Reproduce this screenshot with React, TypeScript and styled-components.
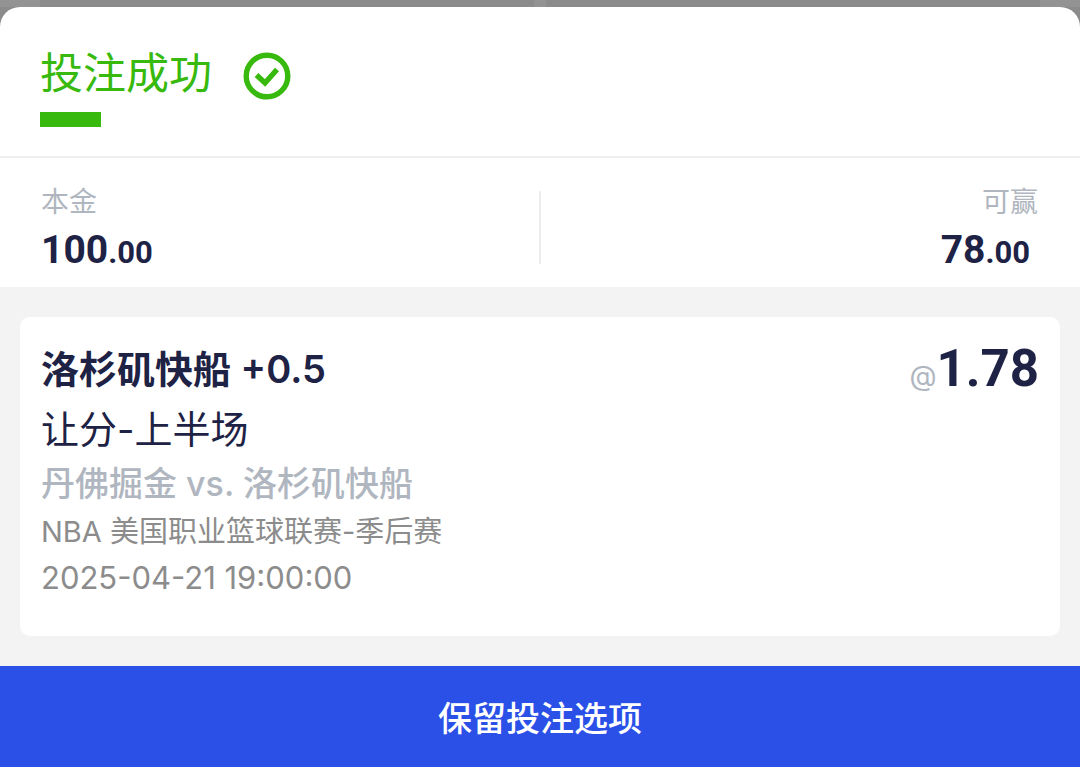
import React from "react";
import styled, { createGlobalStyle } from "styled-components";

const color = {
  ink: "#1e2245",
  green: "#37b90d",
  muted: "#b0b6c0",
  gray: "#8c8c8c",
  surface: "#f3f3f3",
  blue: "#2a50e8",
};

const numberFont = `Roboto, sans-serif`;

const GlobalStyle = createGlobalStyle`
  *, *::before, *::after { box-sizing: border-box; }
  body {
    margin: 0;
    background: #8b8b8b;
    color: ${color.ink};
    font-family: Inter, "Noto Sans CJK SC", sans-serif;
  }
  h1, h2, p, dl, dt, dd { margin: 0; font-weight: 400; }
`;

const Page = styled.div`
  min-height: 100vh;
  display: flex;
  flex-direction: column;
`;

const Backdrop = styled.div`
  display: grid;
  grid-template-columns: 1fr 1fr;
  gap: 12px;
  height: 7px;
  padding: 0 40px;
  background: #939393;
`;

const BackdropTile = styled.div`
  background: #8b8b8b;
`;

const Sheet = styled.main`
  flex: 1;
  display: flex;
  flex-direction: column;
  background: #fff;
  border-radius: 20px 20px 0 0;
`;

const Header = styled.header`
  padding: 36px 40px 29px;
  border-bottom: 2px solid #eeeeee;
`;

const TitleRow = styled.div`
  display: flex;
  align-items: center;
  gap: 31px;
`;

const Title = styled.h1`
  color: ${color.green};
  font-size: 43px;
  line-height: 60px;
`;

const CheckIcon = styled.svg`
  width: 48px;
  height: 48px;
  margin-top: 6px;
`;

const Accent = styled.div`
  width: 61px;
  height: 15px;
  margin-top: 9px;
  background: ${color.green};
`;

const Summary = styled.dl`
  display: flex;
  align-items: flex-start;
  padding: 24px 42px 9px 41px;
`;

const Figure = styled.div<{ $end?: boolean }>`
  flex: 1;
  text-align: ${(p) => (p.$end ? "right" : "left")};
`;

const FigureLabel = styled.dt`
  color: ${color.muted};
  font-size: 28px;
  line-height: 40px;
`;

const Amount = styled.dd<{ $end?: boolean }>`
  padding-right: ${(p) => (p.$end ? "8px" : "0")};
  font-family: ${numberFont};
  font-size: 39px;
  font-weight: 700;
  line-height: 56px;
`;

const Cents = styled.span`
  font-size: 31px;
  line-height: 1;
`;

const Divider = styled.div`
  width: 2px;
  height: 73px;
  margin-top: 9px;
  background: #ececee;
`;

const Body = styled.div`
  padding: 30px 20px;
  background: ${color.surface};
`;

const Card = styled.article`
  display: flex;
  justify-content: space-between;
  align-items: flex-start;
  padding: 22px 21px 35px;
  background: #fff;
  border-radius: 10px;
`;

const Selection = styled.h2`
  font-size: 38px;
  font-weight: 600;
  line-height: 60px;
`;

const Market = styled.p`
  font-size: 38px;
  line-height: 60px;
`;

const Match = styled.p`
  color: ${color.muted};
  font-size: 34px;
  font-weight: 500;
  line-height: 50px;
`;

const League = styled.p`
  color: ${color.gray};
  font-size: 29px;
  line-height: 46px;
`;

const StartTime = styled(League)`
  font-size: 31px;
`;

const Odds = styled.div`
  font-family: ${numberFont};
  font-size: 51px;
  font-weight: 700;
  line-height: 60px;
`;

const At = styled.span`
  color: ${color.muted};
  font-family: Inter, sans-serif;
  font-size: 28px;
  font-weight: 400;
  line-height: 1;
`;

const KeepButton = styled.button`
  height: 101px;
  border: 0;
  background: ${color.blue};
  color: #fff;
  font: inherit;
  font-size: 34px;
  font-weight: 500;
  cursor: pointer;
`;

export default function App() {
  return (
    <>
      <GlobalStyle />
      <Page>
        <Backdrop>
          <BackdropTile />
          <BackdropTile />
        </Backdrop>
        <Sheet lang="zh-CN">
          <Header>
            <TitleRow>
              <Title>投注成功</Title>
              <CheckIcon viewBox="0 0 48 48" fill="none" stroke={color.green} strokeWidth="5.4" aria-hidden="true">
                <circle cx="24" cy="24" r="20.8" />
                <path d="M13.5 23 22 31 34 17.5" />
              </CheckIcon>
            </TitleRow>
            <Accent />
          </Header>
          <Summary>
            <Figure>
              <FigureLabel>本金</FigureLabel>
              <Amount>
                100<Cents>.00</Cents>
              </Amount>
            </Figure>
            <Divider />
            <Figure $end>
              <FigureLabel>可赢</FigureLabel>
              <Amount $end>
                78<Cents>.00</Cents>
              </Amount>
            </Figure>
          </Summary>
          <Body>
            <Card>
              <div>
                <Selection>洛杉矶快船 +0.5</Selection>
                <Market>让分-上半场</Market>
                <Match>丹佛掘金 vs. 洛杉矶快船</Match>
                <League>NBA 美国职业篮球联赛-季后赛</League>
                <StartTime>2025-04-21 19:00:00</StartTime>
              </div>
              <Odds>
                <At>@</At>1.78
              </Odds>
            </Card>
          </Body>
          <KeepButton type="button">保留投注选项</KeepButton>
        </Sheet>
      </Page>
    </>
  );
}
